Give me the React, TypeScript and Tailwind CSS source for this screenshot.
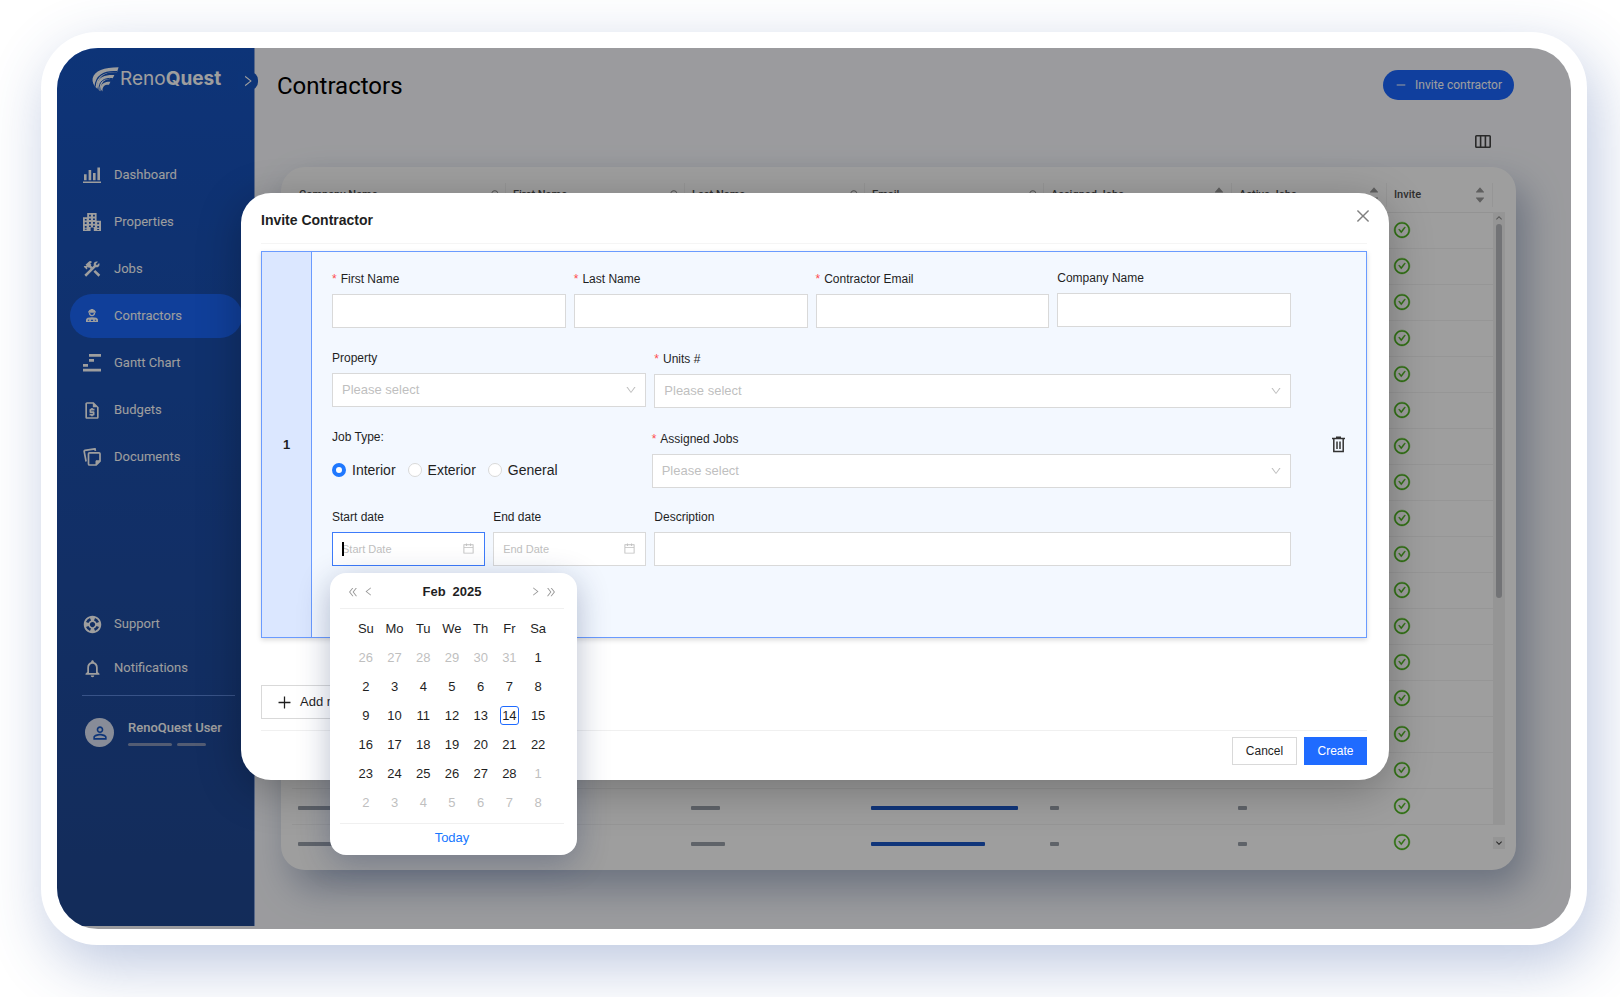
import { useState } from "react";
import type { ReactNode } from "react";
import {
  AiFillCaretDown,
  AiFillCaretUp,
  AiOutlineCalendar,
  AiOutlineCheckCircle,
  AiOutlineClose,
  AiOutlineDoubleLeft,
  AiOutlineDoubleRight,
  AiOutlineDown,
  AiOutlineLeft,
  AiOutlineMinus,
  AiOutlinePlus,
  AiOutlineRight,
  AiOutlineSearch,
} from "react-icons/ai";
import {
  MdConstruction,
  MdKeyboardArrowDown,
  MdKeyboardArrowUp,
  MdNotificationsNone,
  MdOutlineRequestQuote,
  MdOutlineSupport,
  MdPersonOutline,
} from "react-icons/md";

function ChartIcon() {
  return (
    <svg width="18" height="18" viewBox="0 0 18 18" fill="currentColor">
      <path d="M0 15.4h18V17H0zM1 8.2h2.6v6H1zM5.600 4h2.600v10.200H5.600zM10 7h2.600v7.200H10zM14.400 1.400H17v12.800h-2.600z" />
    </svg>
  );
}

function BuildingIcon() {
  return (
    <svg width="18" height="18" viewBox="0 0 18 18" fill="currentColor">
      <path
        fillRule="evenodd"
        d="M4.200 0h9.400v7.800H18V18h-7.200v-3.600H7.600V18H0V4.200h4.200zM6 1.700v1.700h1.900V1.700zm4 0v1.700h1.900V1.700zM6 5.400v1.700h1.900V5.400zm4 0v1.700h1.900V5.400zM1.800 5.900v1.600h1.800V5.900zM6 9.100v1.700h1.900V9.100zm4 0v1.700h1.900V9.100zM1.800 9.200v1.700h1.800V9.200zm12.400.4v1.600h1.900V9.600zM6 12.500v1.400h1.900v-1.400zm4 0v1.400h1.900v-1.400zM1.800 13v1.700h1.800V13zm12.400.1v1.700h1.900v-1.700zM1.800 15.800v1h1.800v-1zm12.400.2v1h1.900v-1z"
      />
    </svg>
  );
}

function WorkerIcon() {
  return (
    <svg width="18" height="18" viewBox="0 0 18 18" fill="currentColor">
      <path d="M5 5.500v-1h.6C5.800 3.400 6.800 2.800 7.800 2.600V2h2.400v.6c1 .2 2 .8 2.200 1.900h.6v1z" />
      <path fillRule="evenodd" d="M5.800 5.500h6.400C12.400 8 10.800 9.200 9 9.200S5.600 8 5.800 5.500zM7.200 6c.1 1.200.9 1.900 1.800 1.900s1.700-.7 1.800-1.900z" />
      <path fillRule="evenodd" d="M3 15v-2.300c0-1.700 2.400-2.500 6-2.500s6 .8 6 2.500V15zm1.800-1.300h1.400v-1.300c-.9.200-1.400.5-1.400.9zm3.100.2h2.200v-1.200H7.900zm3.900-.2h1.400v-.4c0-.4-.5-.7-1.400-.9z" />
    </svg>
  );
}

function GanttIcon() {
  return (
    <svg width="18" height="18" viewBox="0 0 18 18" fill="currentColor">
      <path d="M6 0h12v2.800H6zM6 5h5v2.800H6zM0 10h5v2.800H0zM0 14.800h18v2.800H0z" />
    </svg>
  );
}

function NotesIcon() {
  return (
    <svg width="18" height="18" viewBox="0 0 18 18" fill="none" stroke="currentColor" strokeWidth="1.700">
      <path d="M6.500 4.800H16a1 1 0 0 1 1 1v7.400L13.200 17H6.500a1 1 0 0 1-1-1V5.800a1 1 0 0 1 1-1z" />
      <path d="M17 12.800h-4V17z" fill="currentColor" strokeWidth="1" />
      <path d="M3.100 13.500 1.200 3.600a1 1 0 0 1 .8-1.200l10-1.600.4 2" />
    </svg>
  );
}

function TrashIcon() {
  return (
    <svg width="13" height="17" viewBox="0 0 13 17" fill="none" stroke="currentColor" strokeWidth="1.500">
      <path d="M0 2.500h13M4 1.200h5M1.800 2.500v13h9.400v-13M5 5.500v7.500M8 5.500v7.500" />
    </svg>
  );
}

function ColumnsIcon() {
  return (
    <svg width="16" height="13" viewBox="0 0 16 13" fill="none" stroke="currentColor" strokeWidth="1.600">
      <rect x=".8" y=".8" width="14.400" height="11.400" rx=".8" />
      <path d="M5.600 1v11M10.400 1v11" />
    </svg>
  );
}

function LogoMark() {
  return (
    <svg width="27" height="25" viewBox="0 0 27 25" fill="currentColor">
      <path d="M26.600.2 25 5.200C14 4.600 5.400 8 4.800 21.600 1.800 18.800 0 15 .6 11.600 2.400 3.600 12 .2 26.600.2z" />
      <path d="M3.100 19.800C3.500 9 12 3.500 25 4.700" fill="none" stroke="#1654c2" strokeWidth="1.200" />
      <path d="M22.400 8 20.300 12.200C14 11.600 8.600 14 8.400 24.200 5.600 23 4.800 20.500 5.100 17.500 6.200 9.600 14 7.600 22.400 8z" />
      <path d="M6.900 23.600C6.500 14 12 10.600 20.800 11.600" fill="none" stroke="#1654c2" strokeWidth="1" />
      <path d="M18.400 14.800 17 17.700c-4-.3-6.800 1.200-6.500 6.700-1.500-1.200-2.100-3-1.700-4.600 1-3.600 5-5.300 9.600-5z" />
    </svg>
  );
}

const navItems: { label: string; icon: ReactNode; active?: boolean }[] = [
  { label: "Dashboard", icon: <ChartIcon /> },
  { label: "Properties", icon: <BuildingIcon /> },
  { label: "Jobs", icon: <MdConstruction size={20} /> },
  { label: "Contractors", icon: <WorkerIcon />, active: true },
  { label: "Gantt Chart", icon: <GanttIcon /> },
  { label: "Budgets", icon: <MdOutlineRequestQuote size={21} /> },
  { label: "Documents", icon: <NotesIcon /> },
];

function Sidebar() {
  return (
    <aside className="relative mb-[3px] flex w-[198px] shrink-0 flex-col border-r border-[#8fa9dc] bg-gradient-to-b from-[#1654c2] to-[#204790] text-white">
      <div className="flex h-[62px] items-center pl-[35px]">
        <LogoMark />
        <span className="ml-px font-[Inter] text-[19px] leading-6">
          Reno<b>Quest</b>
        </span>
      </div>
      <button
        aria-label="Expand menu"
        className="absolute top-6 -right-1 flex h-[18px] w-5 items-center justify-center rounded-r-lg bg-[#1654c2] pr-px"
      >
        <AiOutlineRight size={14} />
      </button>

      <nav className="mt-[43px] flex flex-col gap-[3px] pl-[13px]">
        {navItems.map((item) => (
          <a
            key={item.label}
            href="#"
            className={`flex h-11 w-[172px] items-center gap-3 rounded-full pl-3 text-[13px] ${item.active ? "bg-[#1b67f8]" : ""}`}
          >
            <span className="flex w-5 justify-center">{item.icon}</span>
            {item.label}
          </a>
        ))}
      </nav>

      <div className="mt-[123px] flex flex-col pl-[25px] text-[13px]">
        <a href="#" className="flex h-11 items-center gap-[11px]">
          <MdOutlineSupport size={21} />
          Support
        </a>
        <a href="#" className="flex h-11 items-center gap-[11px]">
          <MdNotificationsNone size={21} />
          Notifications
        </a>
      </div>
      <div className="mx-[19px] ml-[25px] mt-[5px] h-px bg-[#5b86dc]" />
      <div className="mt-[22px] flex items-center pl-7">
        <span className="flex size-[29px] items-center justify-center rounded-full bg-[#dbe3f5] text-[#1654c2]">
          <MdPersonOutline size={20} />
        </span>
        <div className="ml-[14px]">
          <p className="text-[13px] leading-[18px] font-medium">RenoQuest User</p>
          <div className="mt-[6px] flex gap-[5px]">
            <i className="h-[3px] w-11 rounded-sm bg-[#8795ba]" />
            <i className="h-[3px] w-[29px] rounded-sm bg-[#8795ba]" />
          </div>
        </div>
      </div>
    </aside>
  );
}

const columns = [
  { label: "Company Name", width: 214, search: true },
  { label: "First Name", width: 179, search: true },
  { label: "Last Name", width: 180, search: true },
  { label: "Email", width: 179, search: true },
  { label: "Assigned Jobs", width: 188 },
  { label: "Active Jobs", width: 155 },
  { label: "Invite", width: 106 },
];

// bar widths for company, first name, last name, email
const rows = [
  [80, 40, 34, 130],
  [64, 44, 29, 148],
  [72, 38, 40, 120],
  [90, 52, 30, 140],
  [58, 40, 36, 112],
  [76, 46, 32, 150],
  [84, 36, 28, 126],
  [62, 50, 38, 134],
  [70, 42, 34, 118],
  [88, 48, 30, 144],
  [66, 38, 36, 122],
  [74, 44, 32, 136],
  [60, 40, 28, 148],
  [82, 52, 34, 116],
  [68, 46, 40, 128],
  [78, 36, 30, 142],
  [70, 42, 29, 147],
  [86, 48, 34, 114],
];

function ContractorsTable() {
  return (
    <div className="mr-[55px] ml-[26px] flex items-start rounded-3xl bg-white pt-[11px] pr-[11px] pb-[10px] pl-[11px] shadow-[10px_18px_36px_rgba(60,85,130,0.4)]">
      <table className="w-full table-fixed border-collapse text-[#4d4d4d]">
        <thead>
          <tr className="h-[34px] border-b border-[#ededed]">
            {columns.map((col) => (
              <th key={col.label} style={{ width: col.width }} className="p-0 text-left text-[11px] font-medium">
                <div className="flex h-6 items-center justify-between border-r border-[#f2f2f2] pr-[6px] pl-[7px]">
                  {col.label}
                  {col.search ? (
                    <AiOutlineSearch size={12} className="-mr-[3px] text-[#8c8c8c]" />
                  ) : (
                    <span className="flex flex-col text-[#9a9a9a]">
                      <AiFillCaretUp size={12} className="-mb-px" />
                      <AiFillCaretDown size={12} className="-mt-px" />
                    </span>
                  )}
                </div>
              </th>
            ))}
          </tr>
        </thead>
        <tbody>
          {rows.map((row, i) => (
            <tr key={i} className="h-9 border-b border-[#f2f2f2] last:border-0">
              {row.map((w, j) => (
                <td key={j} className="p-0 pt-[3px] pl-[6px]">
                  <div className={`h-1 rounded-[1px] ${j === 3 ? "bg-[#1a56c5]" : "bg-[#9aa1aa]"}`} style={{ width: w }} />
                </td>
              ))}
              <td className="p-0 pt-[3px] pl-[6px]">
                <div className="h-1 w-[9px] rounded-[1px] bg-[#9aa1aa]" />
              </td>
              <td className="p-0 pt-[3px] pl-[6px]">
                <div className="h-1 w-[9px] rounded-[1px] bg-[#9aa1aa]" />
              </td>
              <td className="p-0 pl-[6px]">
                <AiOutlineCheckCircle size={18} strokeWidth={24} className="text-[#4ab41a]" />
              </td>
            </tr>
          ))}
        </tbody>
      </table>
      <div className="mt-[34px] w-3 shrink-0 text-[#8c8c8c]">
        <div className="flex h-[613px] flex-col items-center bg-[#f0f0f0]">
          <MdKeyboardArrowUp size={12} />
          <div className="h-[374px] w-[6px] rounded-full bg-[#b8babe]" />
        </div>
        <div className="mt-3 flex h-3 items-center justify-center bg-[#f0f0f0] text-[#444]">
          <MdKeyboardArrowDown size={12} />
        </div>
      </div>
    </div>
  );
}

function Field({ id, label, required, className = "", children }: { id: string; label: string; required?: boolean; className?: string; children: ReactNode }) {
  return (
    <div className={`relative ${required ? "pt-[2px]" : "pt-px"} ${className}`}>
      <label htmlFor={id} className="mb-[7px] flex h-4 items-center gap-1 text-xs leading-4 text-[#1f1f1f]">
        {required && <span className="text-[#ff4d4f]">*</span>}
        {label}
      </label>
      {children}
    </div>
  );
}

function TextInput({ id }: { id: string }) {
  return <input id={id} type="text" className="block h-[34px] w-full border border-[#d9d9d9] bg-white px-[9px] text-[13px] outline-none" />;
}

function SelectInput({ id }: { id: string }) {
  return (
    <div className="relative">
      <select id={id} className="block h-[34px] w-full appearance-none border border-[#d9d9d9] bg-white px-[9px] text-[13px] text-[#bfbfbf] outline-none">
        <option>Please select</option>
      </select>
      <AiOutlineDown size={12} className="pointer-events-none absolute top-[11px] right-[9px] text-[#bfbfbf]" />
    </div>
  );
}

function DateInput({ id, placeholder, active }: { id: string; placeholder: string; active?: boolean }) {
  return (
    <div className="relative">
      <input
        id={id}
        type="text"
        placeholder={placeholder}
        className={`block h-[34px] w-full border bg-white pr-7 pl-[9px] text-[11px] outline-none placeholder:text-[#bfbfbf] ${active ? "border-[#3d7bfa]" : "border-[#d9d9d9]"}`}
      />
      {active && <span className="absolute top-[10px] left-[10px] h-[14px] w-[2px] bg-black" />}
      <AiOutlineCalendar size={13} className="pointer-events-none absolute top-[10px] right-[10px] text-[#bfbfbf]" />
    </div>
  );
}

const weekDays = ["Su", "Mo", "Tu", "We", "Th", "Fr", "Sa"];
// first cell is Jan 26, 2025
const days = Array.from({ length: 42 }, (_, i) => new Date(2025, 0, 26 + i));

function CalendarPopup() {
  return (
    <div className="absolute top-full -left-[2px] z-10 mt-[7px] w-[247px] rounded-2xl bg-white pr-[13px] pl-[10px] text-[13px] text-[#1f1f1f] shadow-[0_8px_32px_rgba(20,40,90,0.3)]">
      <div className="flex h-9 items-center border-b border-[#f0f0f0] px-[6px] pt-[2px] text-[#999]">
        <button aria-label="Previous year" className="p-px">
          <AiOutlineDoubleLeft size={12} />
        </button>
        <button aria-label="Previous month" className="ml-[2px] p-px">
          <AiOutlineLeft size={11} />
        </button>
        <p className="flex-1 space-x-[7px] text-center font-bold text-[#1f1f1f]">
          <span>Feb</span>
          <span>2025</span>
        </p>
        <button aria-label="Next month" className="mr-[2px] p-px">
          <AiOutlineRight size={11} />
        </button>
        <button aria-label="Next year" className="p-px">
          <AiOutlineDoubleRight size={12} />
        </button>
      </div>
      <table className="mx-auto my-[6px] w-[201px] table-fixed text-center">
        <thead>
          <tr className="h-7">
            {weekDays.map((d) => (
              <th key={d} className="p-0 font-normal">{d}</th>
            ))}
          </tr>
        </thead>
        <tbody>
          {[0, 1, 2, 3, 4, 5].map((week) => (
            <tr key={week} className="h-[29px]">
              {days.slice(week * 7, week * 7 + 7).map((day) => {
                const inMonth = day.getMonth() === 1;
                const today = inMonth && day.getDate() === 14;
                return (
                  <td key={day.getTime()} className={`p-0 ${inMonth ? "" : "text-[#bfbfbf]"}`}>
                    <button className={`h-[19px] w-[19px] leading-[17px] ${today ? "rounded-[3px] border border-[#1f6bff]" : ""}`}>
                      {day.getDate()}
                    </button>
                  </td>
                );
              })}
            </tr>
          ))}
        </tbody>
      </table>
      <div className="flex h-8 items-center justify-center border-t border-[#f0f0f0] pb-[3px]">
        <button className="text-[#1677ff]">Today</button>
      </div>
    </div>
  );
}

function InviteModal() {
  const [jobType, setJobType] = useState("Interior");

  return (
    <div
      role="dialog"
      aria-label="Invite Contractor"
      className="w-full max-w-[1148px] rounded-[30px] bg-white px-5 pb-[15px] font-['Liberation_Sans',Arial,sans-serif] text-[#1f1f1f] shadow-[0_10px_44px_rgba(0,0,0,0.27)] xl:pr-[22px]"
    >
      <div className="flex h-[51px] items-center justify-between border-b border-[#f5f5f5]">
        <h2 className="pt-1 text-sm font-bold">Invite Contractor</h2>
        <button aria-label="Close" className="-mr-[5px] -mt-1 text-[#808080]">
          <AiOutlineClose size={18} />
        </button>
      </div>

      <div className="mt-[7px] flex border border-[#6a9bff] bg-[#f3f8ff] shadow-[0_2px_5px_rgba(0,0,0,0.15)]">
        <div className="flex w-[50px] shrink-0 items-center justify-center border-r border-[#6a9bff] bg-[#dbe7ff] text-[13px] font-bold">1</div>
        <div className="flex flex-1 flex-col gap-[21px] pt-[17px] pb-[71px] pl-5">
          <div className="grid grid-cols-4 items-start gap-x-2">
            <Field id="first-name" label="First Name" required>
              <TextInput id="first-name" />
            </Field>
            <Field id="last-name" label="Last Name" required>
              <TextInput id="last-name" />
            </Field>
            <Field id="email" label="Contractor Email" required>
              <TextInput id="email" />
            </Field>
            <Field id="company" label="Company Name">
              <TextInput id="company" />
            </Field>
          </div>
          <div className="grid grid-cols-12 items-start gap-x-2">
            <Field id="property" label="Property" className="col-span-4">
              <SelectInput id="property" />
            </Field>
            <Field id="units" label="Units #" required className="col-span-8">
              <SelectInput id="units" />
            </Field>
          </div>
          <div className="grid grid-cols-3 items-start">
            <fieldset className="pt-px">
              <legend className="mb-4 text-xs leading-4">Job Type:</legend>
              <div className="flex gap-3">
                {["Interior", "Exterior", "General"].map((type) => (
                  <label key={type} className="flex h-4 items-center gap-[6px] text-sm">
                    <input
                      type="radio"
                      name="job-type"
                      checked={jobType === type}
                      onChange={() => setJobType(type)}
                      className="size-[14px] appearance-none rounded-full border border-[#d9d9d9] bg-white checked:border-4 checked:border-[#1f78ff]"
                    />
                    {type}
                  </label>
                ))}
              </div>
            </fieldset>
            <Field id="jobs" label="Assigned Jobs" required className="col-span-2">
              <SelectInput id="jobs" />
            </Field>
          </div>
          <div className="-mt-px grid grid-cols-12 items-start gap-x-2">
            <Field id="start-date" label="Start date" className="col-span-2">
              <DateInput id="start-date" placeholder="Start Date" active />
              <CalendarPopup />
            </Field>
            <Field id="end-date" label="End date" className="col-span-2">
              <DateInput id="end-date" placeholder="End Date" />
            </Field>
            <Field id="description" label="Description" className="col-span-8">
              <TextInput id="description" />
            </Field>
          </div>
        </div>
        <div className="flex w-[75px] shrink-0 items-center justify-center pl-[19px] text-[#333]">
          <button aria-label="Delete contractor">
            <TrashIcon />
          </button>
        </div>
      </div>

      <button className="mt-[47px] flex h-[34px] items-center gap-[7px] border border-[#d9d9d9] px-[14px] text-[13px]">
        <AiOutlinePlus size={17} />
        Add more
      </button>

      <div className="mt-[11px] flex justify-end gap-[7px] border-t border-[#f0f0f0] pt-[6px] text-xs">
        <button className="h-7 w-[65px] border border-[#d9d9d9]">Cancel</button>
        <button className="h-7 w-[63px] bg-[#1f6bff] text-white">Create</button>
      </div>
    </div>
  );
}

export default function App() {
  return (
    <div className="min-h-screen bg-white pt-8 pr-[33px] pb-[52px] pl-[41px] font-[Roboto,sans-serif]">
      <div className="rounded-[56px] bg-white p-4 shadow-[8px_20px_60px_rgba(50,85,160,0.32)]">
        <div className="relative overflow-hidden rounded-[41px]">
          <div className="flex bg-[#fafbff]">
            <Sidebar />
            <main className="min-w-0 flex-1 pb-[59px]">
              <header className="flex h-[74px] items-center justify-between pr-[57px] pl-[22px]">
                <h1 className="pt-px text-2xl leading-8 text-black">Contractors</h1>
                <button className="flex h-[30px] items-center gap-2 rounded-full bg-[#1a66ff] px-3 text-xs text-white">
                  <AiOutlineMinus size={12} />
                  Invite contractor
                </button>
              </header>
              <div className="flex h-[45px] items-start justify-end pt-[13px] pr-[80px] text-[#444]">
                <button aria-label="Columns">
                  <ColumnsIcon />
                </button>
              </div>
              <ContractorsTable />
            </main>
          </div>
          <div className="absolute inset-0 flex items-start justify-center bg-black/38 pt-[145px] pl-[2px]">
            <InviteModal />
          </div>
        </div>
      </div>
    </div>
  );
}
